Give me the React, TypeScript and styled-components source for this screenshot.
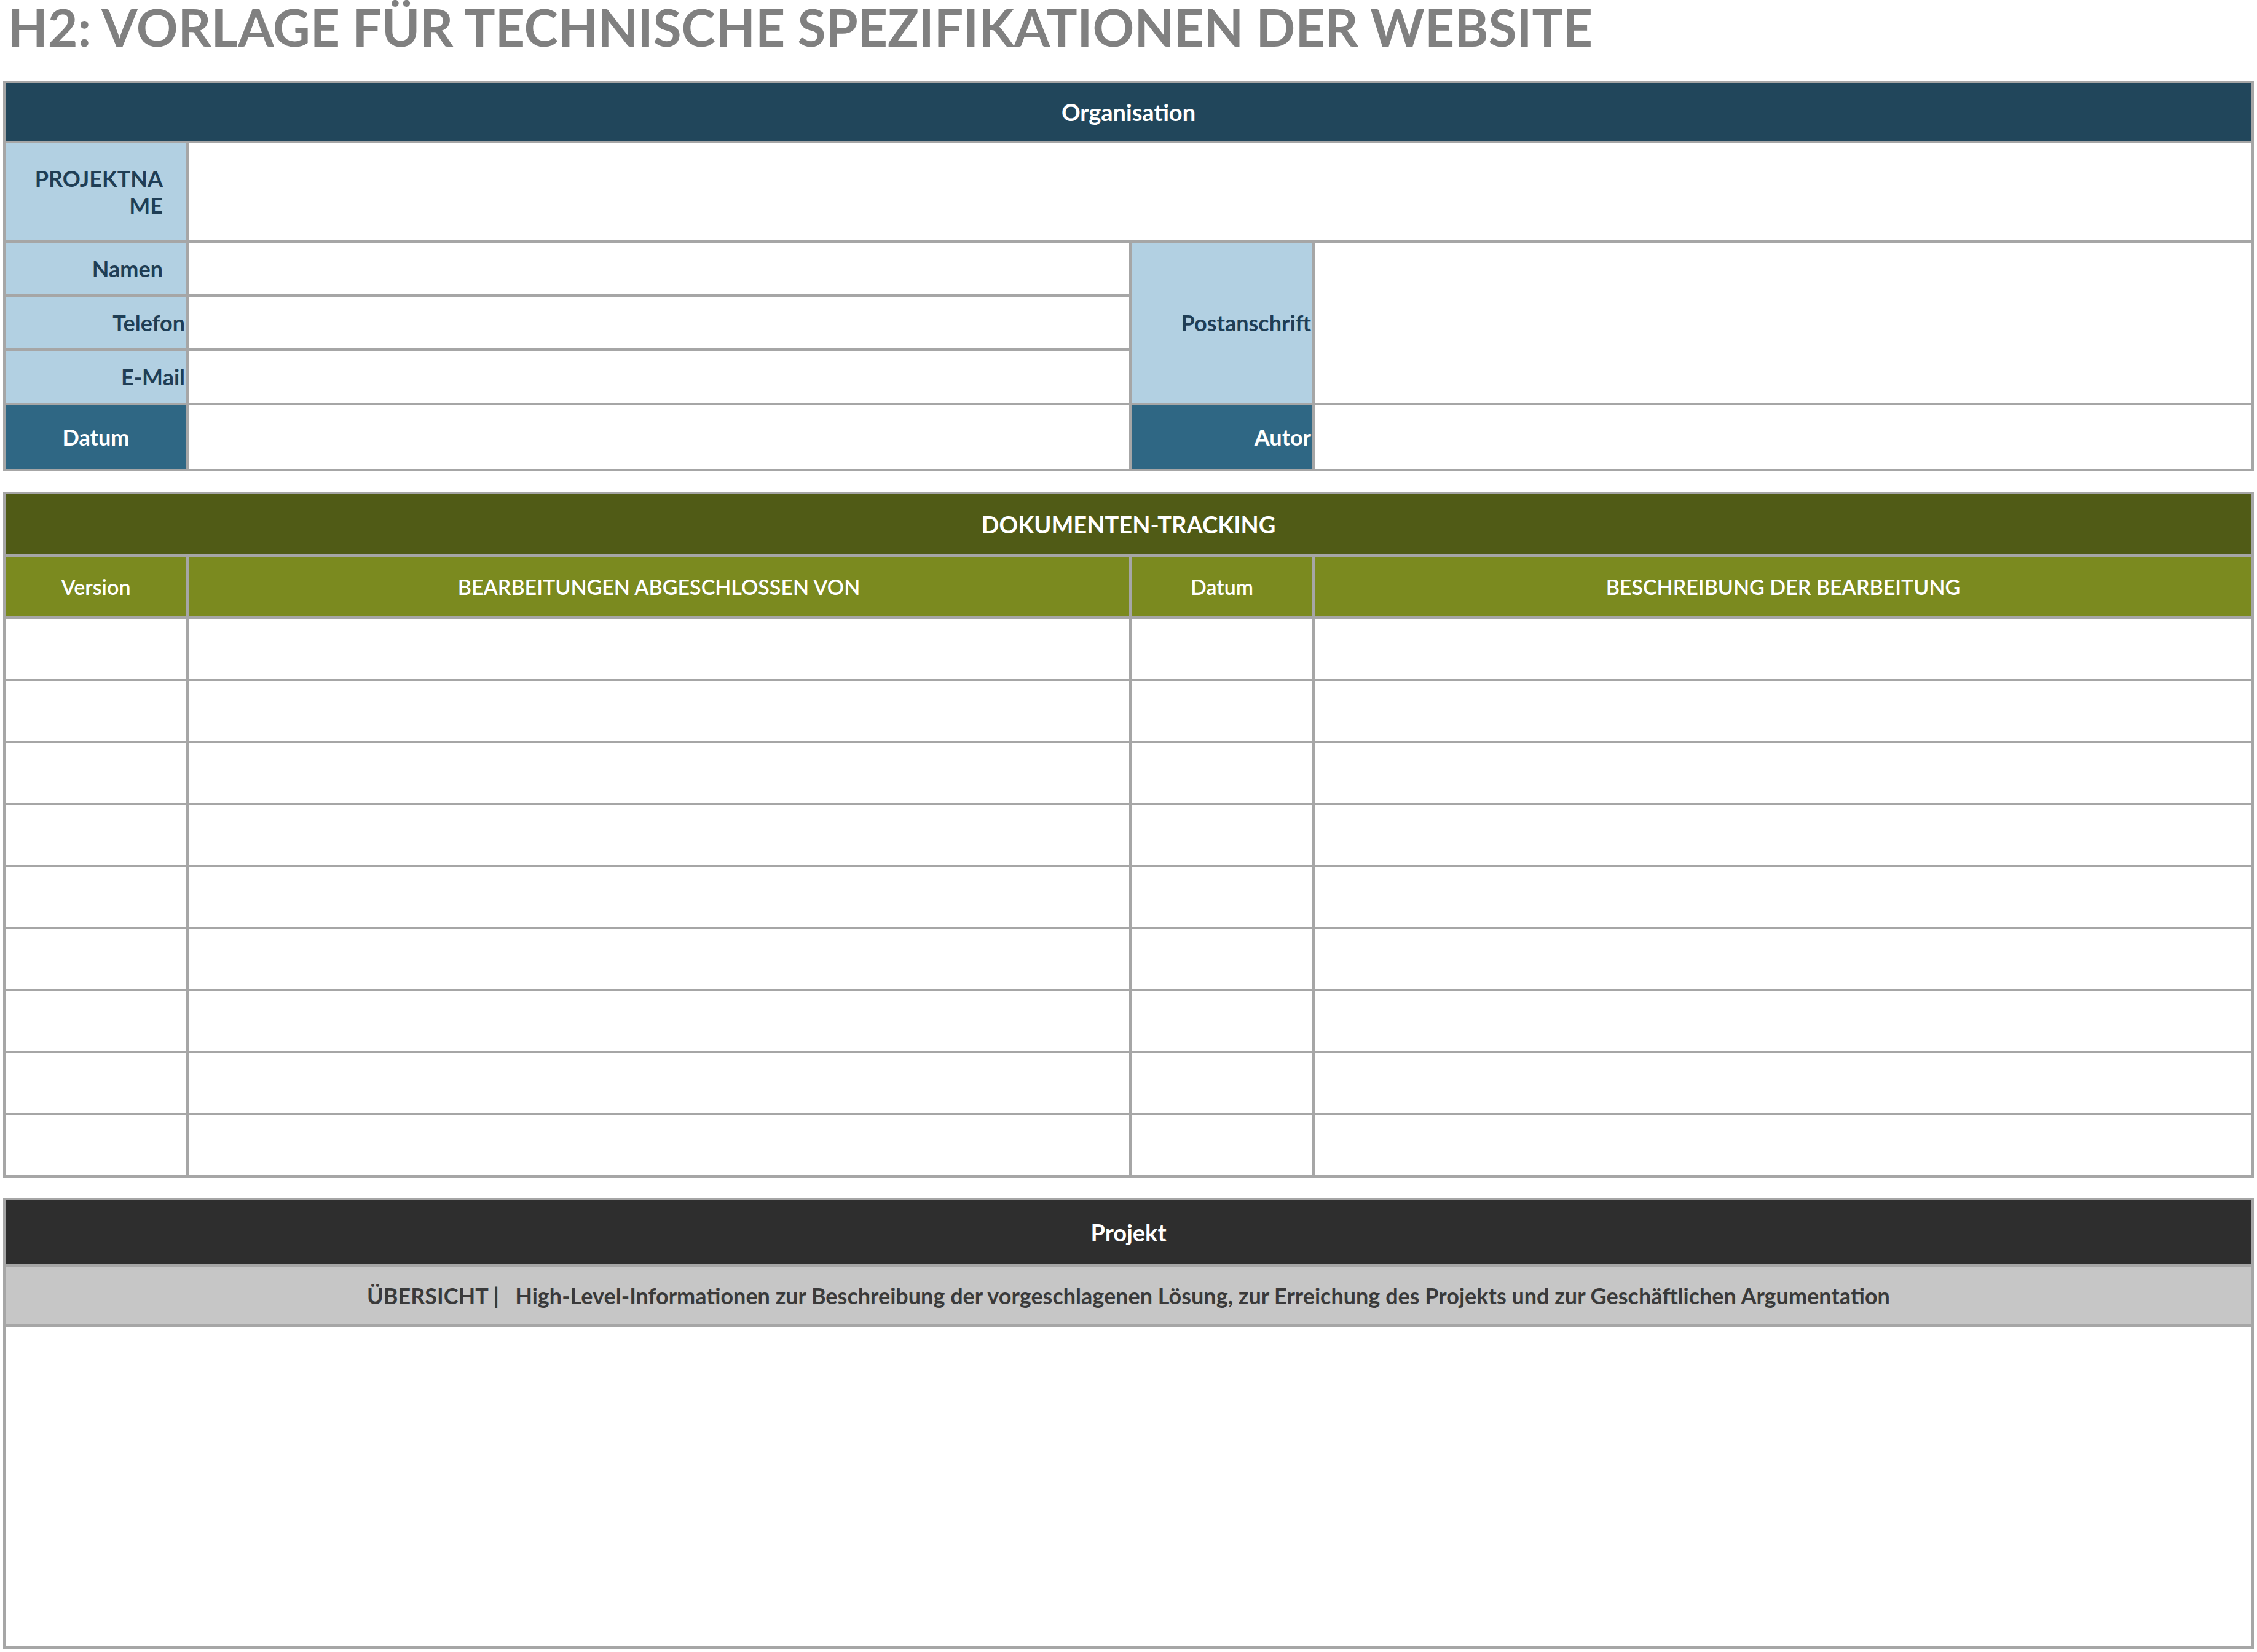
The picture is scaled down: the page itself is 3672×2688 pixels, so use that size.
import React from "react";
import styled, { createGlobalStyle } from "styled-components";

const GlobalStyle = createGlobalStyle`
  body {
    margin: 0;
    background: #ffffff;
    font-family: Lato, "Open Sans", "Liberation Sans", sans-serif;
  }
`;

const Page = styled.div`
  width: 3672px;
  padding: 0 5px;
  box-sizing: border-box;
  display: flex;
  flex-direction: column;
`;

const Title = styled.h2`
  margin: 0;
  height: 131px;
  padding-left: 8px;
  font-size: 84px;
  line-height: 88px;
  font-weight: 700;
  color: #808080;
`;

const Table = styled.div<{ $cols: string; $rows: string; $mb?: number }>`
  display: grid;
  grid-template-columns: ${(p) => p.$cols};
  grid-template-rows: ${(p) => p.$rows};
  gap: 4px;
  padding: 4px;
  background: #a6a6a6;
  margin-bottom: ${(p) => p.$mb ?? 0}px;
`;

const Cell = styled.div<{
  $bg?: string;
  $color?: string;
  $align?: "left" | "center" | "right";
  $span?: string;
  $rowSpan?: string;
  $pr?: number;
}>`
  background: ${(p) => p.$bg ?? "#ffffff"};
  color: ${(p) => p.$color ?? "#1f3e55"};
  grid-column: ${(p) => p.$span ?? "auto"};
  grid-row: ${(p) => p.$rowSpan ?? "auto"};
  display: flex;
  align-items: center;
  justify-content: ${(p) =>
    p.$align === "right" ? "flex-end" : p.$align === "left" ? "flex-start" : "center"};
  text-align: ${(p) => p.$align ?? "center"};
  padding-right: ${(p) => p.$pr ?? 0}px;
  font-size: 36px;
  font-weight: 700;
  box-sizing: border-box;
  min-width: 0;
`;

const NameLabel = styled.span`
  display: block;
  width: 220px;
  word-break: break-all;
  text-align: right;
  line-height: 44px;
`;

const HeaderCell = styled(Cell)`
  font-size: 38px;
  color: #ffffff;
`;

const ColHead = styled(Cell)`
  font-size: 34px;
  color: #ffffff;
  font-weight: 600;
`;

const COLS = "294px 1530px 294px 1fr";

export default function App() {
  const rows = Array.from({ length: 9 });
  return (
    <>
      <GlobalStyle />
      <Page>
        <Title>H2: VORLAGE FÜR TECHNISCHE SPEZIFIKATIONEN DER WEBSITE</Title>

        <Table $cols={COLS} $rows="94px 158px 84px 84px 84px 104px" $mb={33}>
          <HeaderCell $bg="#21465b" $span="1 / -1">Organisation</HeaderCell>
          <Cell $bg="#b2d0e2" $align="right" $pr={38}>
            <NameLabel>PROJEKTNAME</NameLabel>
          </Cell>
          <Cell $span="2 / -1" />
          <Cell $bg="#b2d0e2" $align="right" $pr={38}>Namen</Cell>
          <Cell />
          <Cell $bg="#b2d0e2" $align="right" $pr={2} $span="3" $rowSpan="3 / span 3">
            Postanschrift
          </Cell>
          <Cell $span="4" $rowSpan="3 / span 3" />
          <Cell $bg="#b2d0e2" $align="right" $pr={2}>Telefon</Cell>
          <Cell />
          <Cell $bg="#b2d0e2" $align="right" $pr={2}>E-Mail</Cell>
          <Cell />
          <Cell $bg="#2f6784" $color="#ffffff">Datum</Cell>
          <Cell />
          <Cell $bg="#2f6784" $color="#ffffff" $align="right" $pr={2}>Autor</Cell>
          <Cell />
        </Table>

        <Table $cols={COLS} $rows={`98px 97px repeat(9, 97px)`} $mb={33}>
          <HeaderCell $bg="#505b16" $span="1 / -1">DOKUMENTEN-TRACKING</HeaderCell>
          <ColHead $bg="#7b8a1f">Version</ColHead>
          <ColHead $bg="#7b8a1f">BEARBEITUNGEN ABGESCHLOSSEN VON</ColHead>
          <ColHead $bg="#7b8a1f">Datum</ColHead>
          <ColHead $bg="#7b8a1f">BESCHREIBUNG DER BEARBEITUNG</ColHead>
          {rows.map((_, i) => (
            <React.Fragment key={i}>
              <Cell />
              <Cell />
              <Cell />
              <Cell />
            </React.Fragment>
          ))}
        </Table>

        <Table $cols="1fr" $rows="104px 94px 520px">
          <HeaderCell $bg="#2e2e2e">Projekt</HeaderCell>
          <Cell $bg="#c6c6c6" $color="#3a3a3a">
            ÜBERSICHT&nbsp;|&nbsp;&nbsp;&nbsp;High-Level-Informationen zur Beschreibung der
            vorgeschlagenen Lösung, zur Erreichung des Projekts und zur Geschäftlichen
            Argumentation
          </Cell>
          <Cell />
        </Table>
      </Page>
    </>
  );
}
